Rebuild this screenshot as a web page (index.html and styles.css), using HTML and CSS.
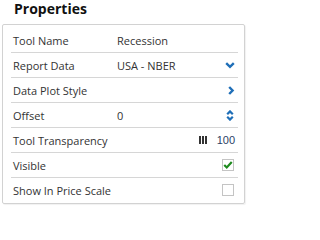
FILE: index.html
```html
<!DOCTYPE html>
<html>
<head>
<meta charset="utf-8">
<link rel="stylesheet" href="styles.css">
</head>
<body>
<div class="title">Properties</div>
<div class="panel">
  <div class="row">
    <span class="label">Tool Name</span>
    <span class="value">Recession</span>
  </div>
  <div class="row">
    <span class="label">Report Data</span>
    <span class="value">USA - NBER</span>
    <svg class="icon" width="10" height="7" viewBox="0 0 10 7"><polyline points="1.2,1.2 5,4.8 8.8,1.2" fill="none" stroke="#1f6fb8" stroke-width="2.4"/></svg>
  </div>
  <div class="row">
    <span class="label">Data Plot Style</span>
    <span class="value"></span>
    <svg class="icon" width="10" height="9" viewBox="0 0 10 9"><polyline points="4.2,1 7.6,4.5 4.2,8" fill="none" stroke="#1f6fb8" stroke-width="2.4"/></svg>
  </div>
  <div class="row">
    <span class="label">Offset</span>
    <span class="value">0</span>
    <svg class="icon" width="10" height="11" viewBox="0 0 10 11"><polyline points="2.2,4.2 5,1.4 7.8,4.2" fill="none" stroke="#1f6fb8" stroke-width="2.2"/><polyline points="2.2,6.8 5,9.6 7.8,6.8" fill="none" stroke="#1f6fb8" stroke-width="2.2"/></svg>
  </div>
  <div class="row">
    <span class="label">Tool Transparency</span>
    <span class="value"></span>
    <span class="slider">
      <svg width="8" height="8" viewBox="0 0 8 8"><rect x="0" y="0" width="2" height="8" fill="#333"/><rect x="3" y="0" width="2" height="8" fill="#333"/><rect x="6" y="0" width="2" height="8" fill="#333"/></svg>
      <span class="num">100</span>
    </span>
  </div>
  <div class="row">
    <span class="label">Visible</span>
    <span class="value"></span>
    <span class="check on"><svg width="12" height="10" viewBox="0 0 12 10"><polyline points="1.5,5 4.5,8 10.5,1.5" fill="none" stroke="#1d8a1d" stroke-width="2.6"/></svg></span>
  </div>
  <div class="row last">
    <span class="label">Show In Price Scale</span>
    <span class="value"></span>
    <span class="check"></span>
  </div>
</div>
</body>
</html>
```
FILE: styles.css
```css
html, body {
  margin: 0;
  padding: 0;
  background: #fff;
}
body {
  font-family: "Open Sans", "DejaVu Sans", sans-serif;
  color: #333;
  width: 248px;
  height: 209px;
  overflow: hidden;
}
.title {
  height: 24px;
  line-height: 18px;
  padding-left: 14px;
  font-size: 14px;
  font-weight: bold;
  color: #111;
  box-sizing: border-box;
}
.panel {
  margin-left: 2px;
  width: 243px;
  box-sizing: border-box;
  border: 1px solid #d2d2d2;
  border-radius: 2px;
  padding: 3px 6px 1px 8px;
  box-shadow: 1px 1px 1px rgba(0,0,0,0.06);
}
.row {
  display: flex;
  align-items: center;
  height: 24px;
  border-bottom: 1px solid #d6d6d6;
  padding: 0 3px 0 2px;
  font-size: 11px;
}
.row.last {
  border-bottom: none;
}
.label {
  width: 104px;
  flex: none;
  white-space: nowrap;
}
.value {
  flex: 1;
  white-space: nowrap;
}
.icon {
  flex: none;
}
.slider {
  display: flex;
  align-items: center;
  gap: 10px;
}
.num {
  font-family: "Liberation Sans", Arial, sans-serif;
  font-size: 11px;
  color: #2b3f66;
}
.check {
  width: 12px;
  height: 12px;
  box-sizing: border-box;
  border: 1px solid #c4c4c4;
  background: #fff;
  display: flex;
  align-items: center;
  justify-content: center;
  margin-right: 1px;
}
.check svg {
  display: block;
}
```
